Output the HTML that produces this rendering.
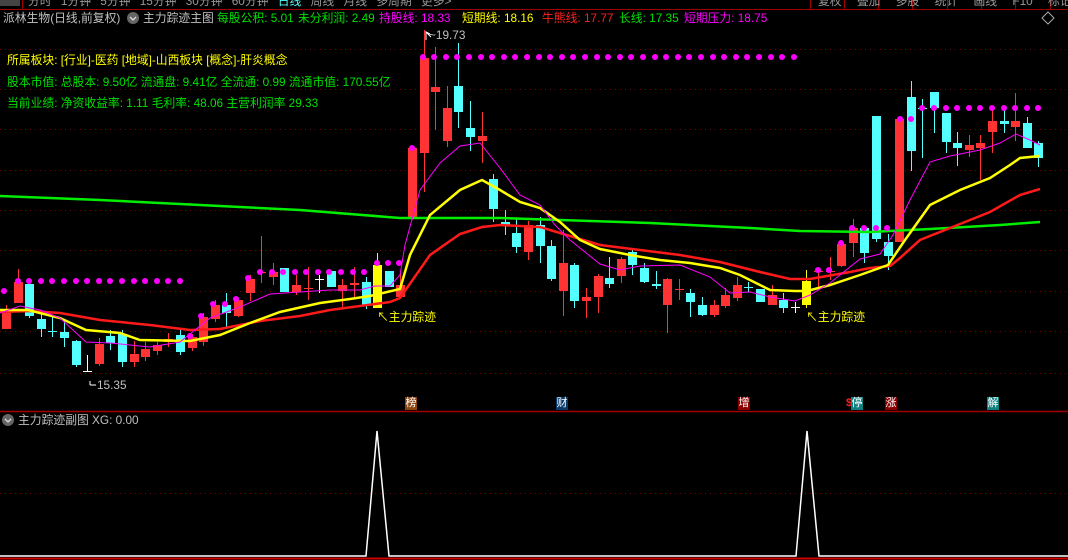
<!DOCTYPE html>
<html><head><meta charset="utf-8"><style>
body{margin:0;background:#000;width:1068px;height:560px;overflow:hidden;position:relative;font-family:"Liberation Sans","Noto Sans CJK SC",sans-serif}
.t{position:absolute;white-space:nowrap;font-size:11.8px;line-height:15px}
.m{position:absolute;width:12px;height:13px;font-size:11px;line-height:13px;color:#fff;text-align:center}
</style></head><body>
<svg width="1068" height="560" style="position:absolute;left:0;top:0" id="s">
<g stroke="#7a0000" stroke-dasharray="1,4" stroke-width="1">
<line x1="0" x2="1068" y1="49.5" y2="49.5"/><line x1="0" x2="1068" y1="89.5" y2="89.5"/><line x1="0" x2="1068" y1="129.5" y2="129.5"/><line x1="0" x2="1068" y1="170.5" y2="170.5"/><line x1="0" x2="1068" y1="210.5" y2="210.5"/><line x1="0" x2="1068" y1="250.5" y2="250.5"/><line x1="0" x2="1068" y1="291.5" y2="291.5"/><line x1="0" x2="1068" y1="331.5" y2="331.5"/><line x1="0" x2="1068" y1="373.5" y2="373.5"/><line x1="0" x2="1068" y1="493.5" y2="493.5"/>
</g>
<line x1="0" x2="1068" y1="9.5" y2="9.5" stroke="#a00000"/>
<line x1="22.5" x2="22.5" y1="0" y2="9" stroke="#a00000"/>
<g stroke="#a00000"><line x1="810.5" x2="810.5" y1="0" y2="9"/><line x1="844.5" x2="844.5" y1="0" y2="9"/><line x1="878.5" x2="878.5" y1="0" y2="9"/><line x1="912.5" x2="912.5" y1="0" y2="9"/><line x1="947.5" x2="947.5" y1="0" y2="9"/><line x1="981.5" x2="981.5" y1="0" y2="9"/><line x1="1015.5" x2="1015.5" y1="0" y2="9"/><line x1="1050.5" x2="1050.5" y1="0" y2="9"/></g>
<line x1="0" x2="1068" y1="411.5" y2="411.5" stroke="#a00000" stroke-width="1.5"/>
<g id="c"></g>
<polyline fill="none" stroke="#00ee00" stroke-width="2.5" points="0,196 100,200 200,205 300,210 400,218 500,218 560,220 650,223 750,228 800,231 870,232 930,229 1000,225 1040,222"/>
<polyline fill="none" stroke="#ff1a1a" stroke-width="2.5" points="0,312 30,311 60,313 100,320 150,325 190,330 220,329 260,321 300,316 330,310 360,306 390,302 400,298 430,255 460,234 482,227 500,225 540,227 560,233 600,245 640,250 680,255 720,262 760,272 790,279 810,279 850,272 870,268 890,266 900,258 920,240 950,228 990,212 1020,195 1040,189"/>
<polyline fill="none" stroke="#ffff00" stroke-width="2.5" points="0,310 28,310 60,318 86,330 120,333 140,340 190,341 220,335 250,323 280,312 320,303 350,299 370,296 400,289 410,255 430,215 460,190 482,180 500,190 520,202 540,208 560,222 580,240 600,249 630,255 660,260 690,263 720,268 740,275 770,290 795,291 807,291 830,285 860,275 888,265 905,240 930,205 960,190 990,178 1010,165 1020,158 1040,156"/>
<polyline fill="none" stroke="#ff00ff" stroke-width="1" points="0,313 20,306 40,310 60,318 86,342 110,343 150,347 180,342 210,318 240,307 270,294 300,292 330,290 360,290 375,286 390,286 400,275 405,245 420,190 440,163 460,146 480,143 500,168 520,195 540,205 555,225 570,240 600,264 620,270 640,266 680,265 710,277 730,293 750,292 770,297 795,301 810,295 830,283 860,259 880,254 893,235 910,200 930,162 950,156 980,150 1000,143 1016,134 1030,140 1040,145"/>
<g id="d" fill="#ff00ff"></g>
<g stroke="#fff" stroke-width="1.5" fill="none"><polyline points="0,556 366,556 377,431 389,556 796,556 807,431 819,556 1068,556"/></g>
<line x1="0" x2="1068" y1="558.5" y2="558.5" stroke="#d00000" stroke-width="2"/>
<g stroke="#fff" fill="none" stroke-width="1"><polyline points="431,37 426,32 426,40"/><path d="M426,32 l4,2 M90,385 h6 M90,385 v-4"/></g>
<g fill="none" stroke="#aaa"><path d="M1042,18 l6,-6 l6,6 l-6,6z"/></g>
<circle cx="133" cy="18" r="6" fill="#666"/><path d="M130,17 l3,3 l3,-3" stroke="#ddd" fill="none" stroke-width="1.3"/>
<circle cx="8" cy="420" r="6" fill="#666"/><path d="M5,419 l3,3 l3,-3" stroke="#ddd" fill="none" stroke-width="1.3"/>
<rect x="0" y="0" width="20" height="6" fill="#444"/>
</svg>
<script>
var D=[[311,329,305,329,'r'],[282,303,269,303,'r'],[284,316,284,318,'c'],[319,329,313,337,'c'],[331,332,317,337,'c'],[332,338,320,347,'c'],[341,365,340,367,'c'],[371,371,355,372,'w'],[344,364,338,366,'r'],[336,343,330,350,'c'],[334,362,330,367,'c'],[354,362,341,367,'r'],[349,357,342,361,'r'],[345,351,342,355,'r'],[339,342,333,347,'r'],[335,352,330,355,'c'],[337,348,334,351,'r'],[317,342,313,346,'r'],[305,319,300,322,'r'],[305,313,293,327,'c'],[300,316,298,317,'r'],[279,293,275,301,'r'],[272,273,236,283,'r'],[272,277,263,285,'r'],[268,292,268,292,'c'],[285,292,275,295,'r'],[288,289,267,300,'r'],[279,279,275,293,'w'],[271,287,271,287,'c'],[285,291,279,308,'r'],[283,285,267,297,'r'],[282,305,277,309,'c'],[265,308,253,308,'y'],[271,287,271,287,'c'],[285,297,273,297,'r'],[148,217,148,220,'r'],[58,153,30,192,'r'],[87,92,47,130,'r'],[108,141,86,147,'r'],[86,112,43,128,'c'],[128,137,101,151,'c'],[136,141,112,163,'r'],[179,209,174,222,'c'],[222,225,210,235,'c'],[233,247,218,253,'c'],[225,252,221,260,'r'],[225,246,217,263,'c'],[246,279,240,281,'c'],[263,291,230,316,'r'],[265,301,263,308,'c'],[297,301,288,318,'r'],[276,297,274,313,'r'],[278,284,257,288,'c'],[259,276,257,283,'r'],[252,265,250,275,'c'],[268,282,263,283,'c'],[284,286,271,289,'c'],[279,305,278,333,'r'],[289,289,279,300,'r'],[293,302,289,317,'c'],[305,315,297,316,'c'],[305,315,300,317,'r'],[295,306,288,308,'r'],[285,298,277,301,'r'],[287,287,282,292,'c'],[289,302,289,302,'c'],[295,305,285,305,'r'],[300,308,293,313,'c'],[307,307,302,313,'w'],[281,305,270,308,'y'],[271,272,268,288,'r'],[271,271,257,280,'r'],[244,266,242,267,'r'],[228,243,219,257,'r'],[228,253,228,263,'c'],[116,239,116,242,'c'],[242,256,234,270,'c'],[119,242,119,242,'r'],[97,151,81,171,'c'],[108,108,99,158,'c'],[92,108,92,133,'c'],[113,142,113,153,'c'],[143,148,132,166,'c'],[145,150,135,157,'r'],[143,148,135,180,'r'],[121,132,110,153,'r'],[121,124,110,133,'c'],[121,127,93,141,'r'],[123,148,117,148,'c'],[143,158,141,167,'c']];
var col={r:'#ff3333',c:'#54ffff',w:'#ffffff',y:'#ffff00'};var h='';
D.forEach(function(d,i){var x=Math.round(6+11.6*i),c=col[d[4]];h+='<line x1="'+(x+.5)+'" x2="'+(x+.5)+'" y1="'+d[2]+'" y2="'+d[3]+'" stroke="'+c+'"/>';var bh=Math.max(d[1]-d[0],1);h+='<rect x="'+(x-4)+'" y="'+d[0]+'" width="9" height="'+bh+'" fill="'+c+'"/>';});
document.getElementById('c').innerHTML=h;
var P=[[4,291],[201,316],[190,336],[213,304],[225,304],[236,299],[248,278],[260,272],[272,272],[377,263],[388,263],[399,263],[412,148],[818,270],[829,270],[841,243],[852,228],[864,228],[876,228],[887,228],[900,119],[911,119]];
for(var i=1;i<=15;i++)P.push([Math.round(6+11.6*i),281]);
for(var x=283;x<=366;x+=11.6)P.push([Math.round(x),272]);
for(var i=36;i<=68;i++)P.push([Math.round(6+11.6*i)-1,57]);
for(var i=79;i<=89;i++)P.push([Math.round(6+11.6*i),108]);
var g='';P.forEach(function(p){g+='<circle cx="'+p[0]+'" cy="'+p[1]+'" r="3"/>'});document.getElementById('d').innerHTML=g;
</script>
<div class="t" style="left:28px;top:-6px;color:#999;word-spacing:6px">分时 1分钟 5分钟 15分钟 30分钟 60分钟 <span style="color:#5ff">日线</span> 周线 月线 多周期 更多&gt;</div>
<div class="t" style="left:818px;top:-6px;color:#999;word-spacing:12px">复权 叠加 多股 统计 画线 F10 标记</div>
<div class="t" style="left:3px;top:11px;color:#c0c0c0">派林生物(日线,前复权)</div>
<div class="t" style="left:143px;top:11px;color:#c0c0c0">主力踪迹主图</div>
<div class="t" style="left:217px;top:11px;color:#00e000">每股公积: 5.01</div>
<div class="t" style="left:298px;top:11px;color:#00e000">未分利润: 2.49</div>
<div class="t" style="left:379px;top:11px;color:#ff00ff">持股线: 18.33</div>
<div class="t" style="left:462px;top:11px;color:#ffff00">短期线: 18.16</div>
<div class="t" style="left:542px;top:11px;color:#ff2020">牛熊线: 17.77</div>
<div class="t" style="left:619px;top:11px;color:#00e000">长线: 17.35</div>
<div class="t" style="left:684px;top:11px;color:#ff00ff">短期压力: 18.75</div>
<div class="t" style="left:7px;top:53px;color:#ffff00">所属板块: [行业]-医药 [地域]-山西板块 [概念]-肝炎概念</div>
<div class="t" style="left:7px;top:75px;color:#00e000">股本市值: 总股本: 9.50亿 流通盘: 9.41亿 全流通: 0.99 流通市值: 170.55亿</div>
<div class="t" style="left:7px;top:96px;color:#00e000">当前业绩: 净资收益率: 1.11 毛利率: 48.06 主营利润率 29.33</div>
<div class="t" style="left:429px;top:28px;color:#c0c0c0">~19.73</div>
<div class="t" style="left:97px;top:378px;color:#c0c0c0">15.35</div>
<div class="t" style="left:377px;top:310px;color:#ffff00">↖主力踪迹</div>
<div class="t" style="left:806px;top:310px;color:#ffff00">↖主力踪迹</div>
<div class="m" style="left:405px;top:397px;background:#8b4510">榜</div>
<div class="m" style="left:556px;top:397px;background:#0a3a6a">财</div>
<div class="m" style="left:738px;top:397px;background:#8a0000">增</div>
<div class="m" style="left:843px;top:397px;color:#f22;background:none;font-weight:bold">$</div>
<div class="m" style="left:851px;top:397px;background:#108080">停</div>
<div class="m" style="left:885px;top:397px;background:#8a0000">涨</div>
<div class="m" style="left:987px;top:397px;background:#108080">解</div>
<div class="t" style="left:18px;top:413px;color:#c0c0c0">主力踪迹副图 XG: 0.00</div>
</body></html>
